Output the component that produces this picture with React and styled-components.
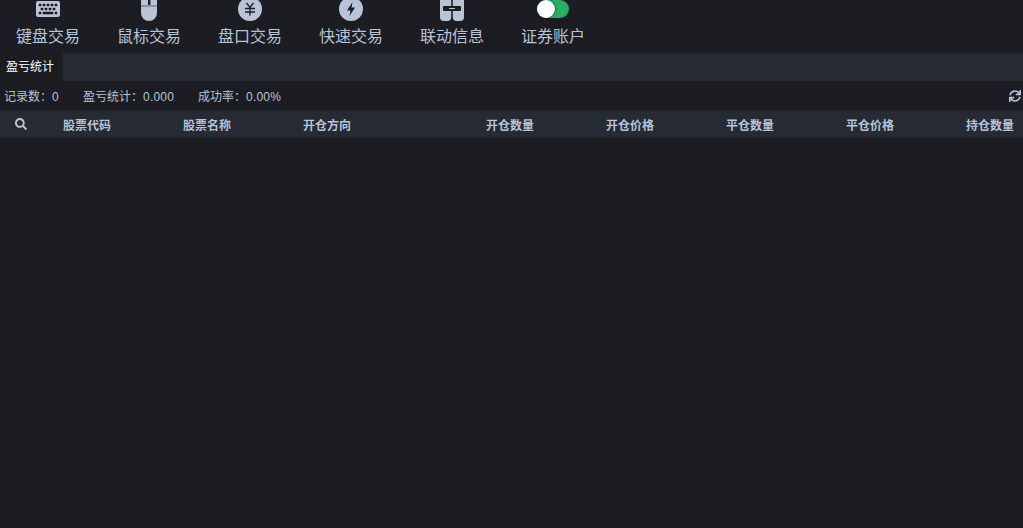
import React from 'react'
import styled, { createGlobalStyle } from 'styled-components'
import { FaKeyboard, FaSearch, FaSync } from 'react-icons/fa'

const GlobalStyle = createGlobalStyle`
    html, body {
        margin: 0;
        height: 100%;
        background: #1b1d22;
    }
    #root {
        height: 100%;
    }
`
const Page = styled.div`
    height: 528px;
    overflow: hidden;
    background: #1b1d22;
    color: #b9c3d6;
    font-family: "Liberation Sans", "Noto Sans CJK SC", sans-serif;
`
const Toolbar = styled.div`
    height: 53px;
    box-sizing: border-box;
    padding: 0 0 8px 16px;
    display: flex;
    align-items: flex-end;
    gap: 37px;
    overflow: hidden;
`
const ToolItem = styled.div`
    width: 64px;
    display: flex;
    flex-direction: column;
    align-items: center;
`
const IconSlot = styled.div`
    height: 24px;
    margin-bottom: 8px;
    display: flex;
    align-items: flex-end;
    justify-content: center;
    font-size: 24px;
    line-height: 0;
`
const ToolLabel = styled.div`
    font-size: 16px;
    line-height: 16px;
    color: #b9c3d6;
    white-space: nowrap;
`
const Track = styled.div`
    width: 32px;
    height: 18px;
    margin-bottom: 3px;
    border-radius: 9px;
    background: #27ae67;
    display: flex;
`
const Knob = styled.div`
    width: 18px;
    height: 18px;
    border-radius: 50%;
    background: #fff;
    box-shadow: 1px 0 2px rgba(0, 0, 0, 0.4);
`
const TabBar = styled.div`
    height: 28px;
    background: #262a33;
    display: flex;
`
const Tab = styled.div`
    width: 63px;
    box-sizing: border-box;
    padding-left: 6px;
    background: #1b1d22;
    color: #fff;
    font-size: 12px;
    line-height: 28px;
`
const StatsRow = styled.div`
    height: 29px;
    box-sizing: border-box;
    padding: 0 2px 0 4px;
    display: flex;
    align-items: center;
    font-size: 12px;
    color: #b9c3d6;
`
const Stat = styled.span`
    width: ${props => props.$width}px;
    white-space: nowrap;
`
const Num = styled.span`
    letter-spacing: 0.2px;
`
const Refresh = styled.span`
    margin-left: auto;
    font-size: 12px;
    line-height: 0;
`
const HeaderRow = styled.div`
    height: 28px;
    padding-right: 1px;
    background: #262a33;
    display: grid;
    grid-template-columns: 55px 120px 120px 127px repeat(5, 120px);
    align-items: center;
    font-size: 12px;
    font-weight: 700;
    color: #b9c3d6;
`
const SearchCell = styled.div`
    padding-left: 15px;
    line-height: 0;
    font-size: 12px;
`
const Cell = styled.div`
    padding: 0 8px;
    text-align: ${props => (props.$right ? 'right' : 'left')};
    white-space: nowrap;
`

const MouseIcon = () => (
    <svg width="16" height="30" viewBox="0 0 16 30">
        <path d="M0 9a8 8 0 0 1 16 0v13a8 8 0 0 1-16 0z" fill="#b9c3d6" />
        <path d="M0 15h16" stroke="#1b1d22" strokeWidth="0.6" />
        <rect x="7" y="8" width="2.4" height="6" fill="#1b1d22" />
    </svg>
)

const YenIcon = () => (
    <svg width="24" height="24" viewBox="0 0 24 24">
        <circle cx="12" cy="12" r="12" fill="#b9c3d6" />
        <path d="M8.500 6l3.500 4.500L15.500 6M12 10.500V18.500M7 11.500h10M7 15h10" fill="none" stroke="#1b1d22" strokeWidth="1.3" />
    </svg>
)

const BoltIcon = () => (
    <svg width="24" height="24" viewBox="0 0 24 24">
        <circle cx="12" cy="12" r="12" fill="#b9c3d6" />
        <path d="M13.500 5L8 13.500h3.500L10.500 19 16 10.500h-3.500z" fill="#1b1d22" />
    </svg>
)

const LinkIcon = () => (
    <svg width="24" height="30" viewBox="0 0 24 30">
        <path d="M0 0h11.200v26a4 4 0 0 1-4 4H4a4 4 0 0 1-4-4zM12.800 0H24v26a4 4 0 0 1-4 4h-3.200a4 4 0 0 1-4-4z" fill="#b9c3d6" />
        <rect x="3" y="15" width="18" height="5" rx="1" fill="#1b1d22" />
        <rect x="9" y="17" width="6" height="1" fill="#b9c3d6" />
    </svg>
)

const tools = [
    { label: '键盘交易', icon: <FaKeyboard style={{ display: 'block' }} /> },
    { label: '鼠标交易', icon: <MouseIcon /> },
    { label: '盘口交易', icon: <YenIcon /> },
    { label: '快速交易', icon: <BoltIcon /> },
    { label: '联动信息', icon: <LinkIcon /> },
    { label: '证券账户', icon: <Track><Knob /></Track> },
]

const columns = ['股票代码', '股票名称', '开仓方向', '开仓数量', '开仓价格', '平仓数量', '平仓价格', '持仓数量']

const App = () => (
    <Page>
        <GlobalStyle />
        <Toolbar>
            {tools.map(tool => (
                <ToolItem key={tool.label}>
                    <IconSlot>{tool.icon}</IconSlot>
                    <ToolLabel>{tool.label}</ToolLabel>
                </ToolItem>
            ))}
        </Toolbar>
        <TabBar>
            <Tab>盈亏统计</Tab>
        </TabBar>
        <StatsRow>
            <Stat $width={79}>记录数：<Num>0</Num></Stat>
            <Stat $width={115}>盈亏统计：<Num>0.000</Num></Stat>
            <Stat $width={100}>成功率：<Num>0.00%</Num></Stat>
            <Refresh><FaSync /></Refresh>
        </StatsRow>
        <HeaderRow>
            <SearchCell><FaSearch /></SearchCell>
            {columns.map((name, i) => (
                <Cell key={name} $right={i > 2}>{name}</Cell>
            ))}
        </HeaderRow>
    </Page>
)

export default App
